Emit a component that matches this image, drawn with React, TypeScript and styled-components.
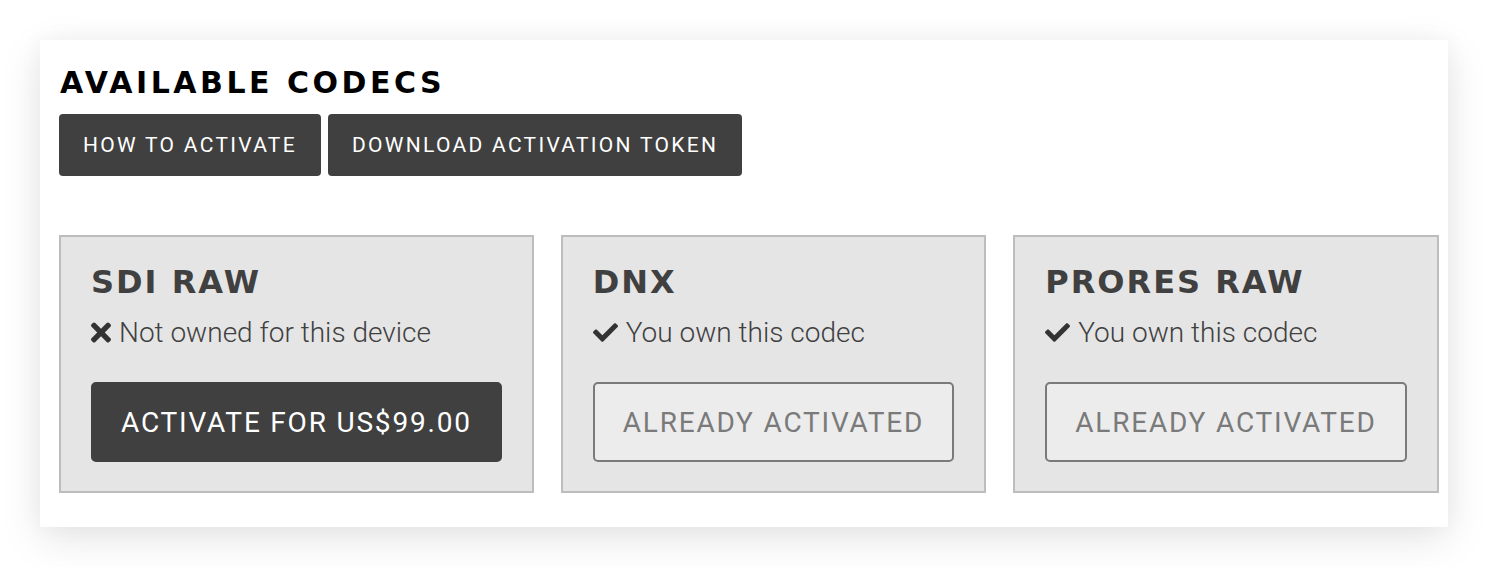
import React from "react";
import styled, { createGlobalStyle } from "styled-components";
import { FaCheck, FaTimes } from "react-icons/fa";

const Global = createGlobalStyle`
  html, body { margin: 0; padding: 0; background: #ffffff; }
  body { font-family: "Roboto", "Liberation Sans", sans-serif; }
  * { box-sizing: border-box; }
`;

const Page = styled.div`
  padding: 40px;
  width: 1488px;
`;

const Panel = styled.section`
  width: 1408px;
  background: #ffffff;
  padding: 20px 20px 34px 19px;
  box-shadow: 0 12px 40px rgba(0, 0, 0, 0.1), 0 0 24px rgba(0, 0, 0, 0.04);
`;

const Heading = styled.h2`
  margin: 0 0 8px 1px;
  font-family: "DejaVu Sans", "Liberation Sans", sans-serif;
  font-weight: 700;
  font-size: 30px;
  line-height: 46px;
  letter-spacing: 3.5px;
  color: #000;
`;

const Toolbar = styled.div`
  display: flex;
  gap: 7px;
`;

const ToolButton = styled.button`
  flex: none;
  height: 62px;
  padding: 0 24px;
  border: none;
  border-radius: 4px;
  background: #404040;
  color: #ffffff;
  font-family: "Roboto", "Liberation Sans", sans-serif;
  font-weight: 400;
  font-size: 21px;
  letter-spacing: 2.3px;
  white-space: nowrap;
  cursor: pointer;
`;

const CardRow = styled.div`
  display: flex;
  align-items: flex-start;
  gap: 27px;
  margin-top: 59px;
`;

const Card = styled.div`
  flex: none;
  display: flex;
  flex-direction: column;
  align-items: flex-start;
  background: #e5e5e5;
  border: 2px solid #bdbdbd;
  padding: 25px 30px 29px;
`;

const CardTitle = styled.h3`
  margin: 0;
  font-family: "DejaVu Sans", "Liberation Sans", sans-serif;
  font-weight: 700;
  font-size: 32px;
  line-height: 40px;
  letter-spacing: 2px;
  color: #404040;
`;

const Status = styled.div`
  display: flex;
  align-items: center;
  gap: 8px;
  margin-top: 12px;
  height: 36px;
  font-family: "Roboto", "Liberation Sans", sans-serif;
  font-weight: 300;
  font-size: 28px;
  color: #404040;
  white-space: nowrap;
`;

const CrossIcon = styled(FaTimes)`
  flex: none;
  width: 20px;
  height: 29px;
  color: #333;
`;

const CheckIcon = styled(FaCheck)`
  flex: none;
  width: 25px;
  height: 25px;
  color: #333;
`;

const ActionButton = styled.button<{ $owned: boolean }>`
  margin-top: 32px;
  height: 80px;
  padding: 0 28px;
  border-radius: 5px;
  font-family: "Roboto", "Liberation Sans", sans-serif;
  font-weight: 400;
  font-size: 28px;
  letter-spacing: 1.8px;
  white-space: nowrap;
  border: 2px solid ${(p) => (p.$owned ? "#7a7a7a" : "#404040")};
  background: ${(p) => (p.$owned ? "#ececec" : "#404040")};
  color: ${(p) => (p.$owned ? "#7a7a7a" : "#ffffff")};
  cursor: ${(p) => (p.$owned ? "default" : "pointer")};
`;

const codecs = [
  { name: "SDI RAW", owned: false },
  { name: "DNX", owned: true },
  { name: "PRORES RAW", owned: true },
];

export default function App() {
  return (
    <Page>
      <Global />
      <Panel>
        <Heading>AVAILABLE CODECS</Heading>
        <Toolbar>
          <ToolButton>HOW TO ACTIVATE</ToolButton>
          <ToolButton>DOWNLOAD ACTIVATION TOKEN</ToolButton>
        </Toolbar>
        <CardRow>
          {codecs.map((c) => (
            <Card key={c.name}>
              <CardTitle>{c.name}</CardTitle>
              <Status>
                {c.owned ? <CheckIcon /> : <CrossIcon />}
                <span>{c.owned ? "You own this codec" : "Not owned for this device"}</span>
              </Status>
              <ActionButton $owned={c.owned}>
                {c.owned ? "ALREADY ACTIVATED" : "ACTIVATE FOR US$99.00"}
              </ActionButton>
            </Card>
          ))}
        </CardRow>
      </Panel>
    </Page>
  );
}
